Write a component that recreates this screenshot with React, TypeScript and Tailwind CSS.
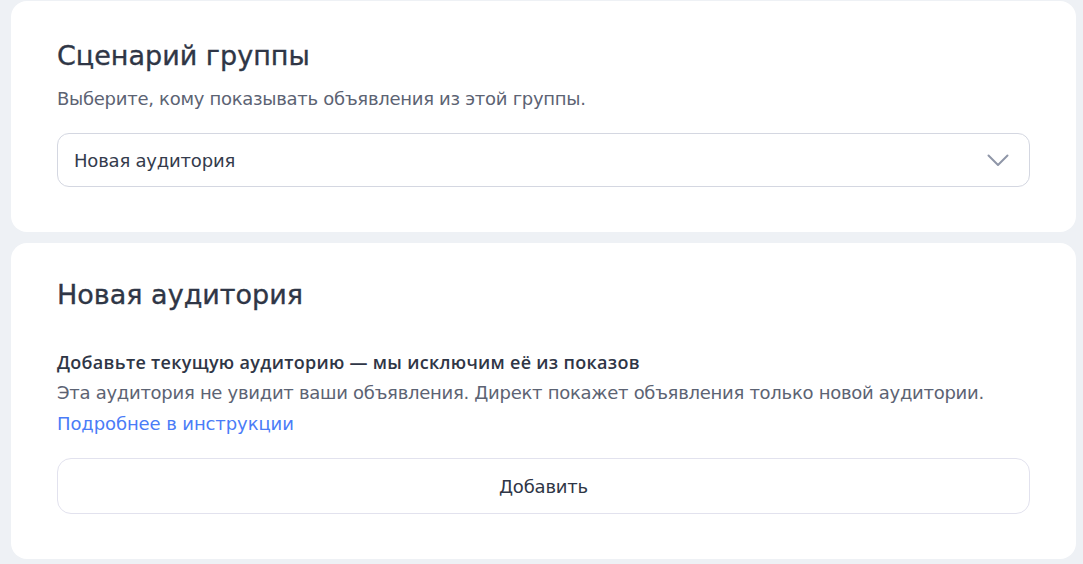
export default function App() {
  return (
    <div
      className="min-h-[564px] bg-[#eef1f5] pl-[11px] pr-[7px] pt-px pb-1 flex flex-col gap-[11px]"
      style={{ fontFamily: '"DejaVu Sans", sans-serif' }}
    >
      {/* Scenario */}
      <section className="bg-white rounded-[16px] px-[46px] pt-[38px] pb-[45px]">
        <h2 className="text-[27px] leading-[34px] text-[#2f3646] [-webkit-text-stroke:0.35px_#2f3646]">Сценарий группы</h2>
        <p className="mt-[14px] text-[18px] leading-[24px] text-[#5c6373] tracking-[-0.28px]">
          Выберите, кому показывать объявления из этой группы.
        </p>
        <button className="mt-[22px] w-full h-[54px] rounded-[12px] border border-[#d4d7e1] flex items-center justify-between pl-[16px] pr-[20px] text-[18px] text-[#343b4c] tracking-[-0.2px]">
          <span>Новая аудитория</span>
          <svg width="22" height="13" viewBox="0 0 22 13" fill="none">
            <path d="M1.5 1.5 L11 11 L20.5 1.5" stroke="#8f96a8" strokeWidth="2" strokeLinecap="round" strokeLinejoin="round" />
          </svg>
        </button>
      </section>

      {/* New audience */}
      <section className="bg-white rounded-[16px] px-[46px] pt-[35px] pb-[45px]">
        <h2 className="text-[27px] leading-[34px] text-[#2f3646] [-webkit-text-stroke:0.35px_#2f3646]">Новая аудитория</h2>
        <div className="mt-[35px] text-[18px] tracking-[-0.28px]">
          <p
            className="leading-[30px] font-semibold text-[#2f3646] tracking-[0.3px]"
            style={{ fontFamily: '"Open Sans", sans-serif' }}
          >
            Добавьте текущую аудиторию — мы исключим её из показов
          </p>
          <p className="leading-[31px] text-[#5c6373]">
            Эта аудитория не увидит ваши объявления. Директ покажет объявления только новой аудитории.
          </p>
          <a href="#" className="block leading-[31px] text-[#4a7cf7] tracking-[-0.1px]">Подробнее в инструкции</a>
        </div>
        <button className="mt-[19px] w-full h-[56px] rounded-[14px] border border-[#e2e2ee] text-[18px] text-[#2f3646] tracking-[-0.2px]">
          Добавить
        </button>
      </section>
    </div>
  );
}
